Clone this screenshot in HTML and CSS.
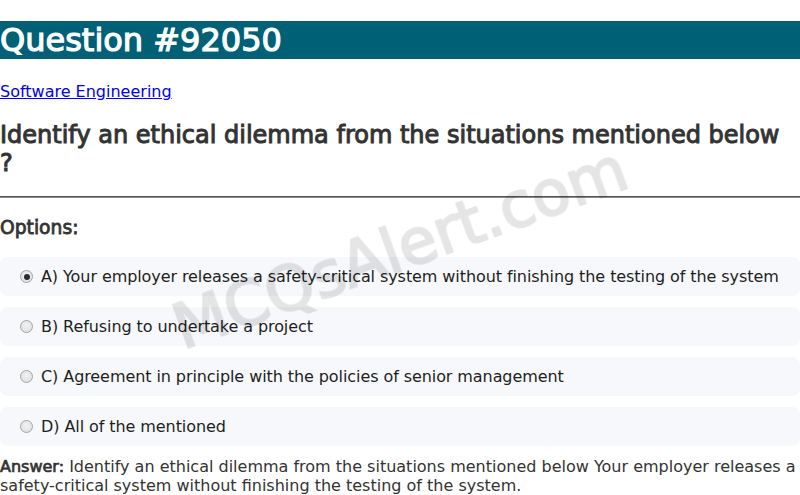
FILE: index.html
```html
<!DOCTYPE html>
<html lang="en">
<head>
<meta charset="utf-8">
<title>Question #92050</title>
<link rel="stylesheet" href="styles.css">
</head>
<body>
  <h1 class="title">Question #92050</h1>
  <p class="category"><a href="#">Software Engineering</a></p>
  <h2 class="question">Identify an ethical dilemma from the situations mentioned below ?</h2>
  <hr class="divider">
  <h3 class="options-title">Options:</h3>
  <div class="options">
    <label class="option"><input type="radio" name="q" checked disabled> A) Your employer releases a safety-critical system without finishing the testing of the system</label>
    <label class="option"><input type="radio" name="q" disabled> B) Refusing to undertake a project</label>
    <label class="option"><input type="radio" name="q" disabled> C) Agreement in principle with the policies of senior management</label>
    <label class="option"><input type="radio" name="q" disabled> D) All of the mentioned</label>
  </div>
  <div class="answer"><strong class="answer-label">Answer:</strong> Identify an ethical dilemma from the situations mentioned below Your employer releases a safety-critical system without finishing the testing of the system.</div>
  <div class="watermark">MCQsAlert.com</div>
</body>
</html>
```

FILE: styles.css
```css
html, body {
  margin: 0;
  padding: 0;
  background: #ffffff;
}

body {
  font-family: "DejaVu Sans", sans-serif;
  color: #333333;
  font-size: 16px;
}

.title {
  font-size: 32px;
  font-weight: normal;
  -webkit-text-stroke: 1.2px #ffffff;
  color: #ffffff;
  background: #006075;
  margin: 21px 0 23px;
}

.category {
  margin: 16px 0;
}

.category a {
  color: #0000ee;
  text-decoration: underline;
}

.question {
  font-size: 24px;
  font-weight: normal;
  -webkit-text-stroke: 1px #333333;
  color: #333333;
  margin: 20px 0 19px;
  padding-right: 12px;
}

.divider {
  border: none;
  border-top: 1px solid #555555;
  border-bottom: 1px solid #8a8a8a;
  height: 0;
  margin: 0;
}

.options-title {
  font-size: 18.72px;
  font-weight: normal;
  -webkit-text-stroke: 0.8px #333333;
  color: #333333;
  margin: 19px 0 19px;
}

.options {
  display: flex;
  flex-direction: column;
  gap: 11px;
}

.option {
  display: block;
  background: #f7f8fc;
  border-radius: 8px;
  padding: 10px 6px 10px 15px;
  line-height: 19px;
  color: #1e1e1e;
  letter-spacing: -0.08px;
}

.option input {
  appearance: none;
  -webkit-appearance: none;
  box-sizing: border-box;
  width: 13px;
  height: 13px;
  margin: 3px 3px 0 5px;
  border: 1px solid #a3a3a3;
  border-radius: 50%;
  background: radial-gradient(circle at 50% 40%, #f2f2f2 0%, #dcdcdc 100%);
  vertical-align: -1px;
  position: relative;
}

.option input:checked::after {
  content: "";
  position: absolute;
  left: 2.5px;
  top: 2.5px;
  width: 6px;
  height: 6px;
  border-radius: 50%;
  background: #2b2b2b;
}

.answer {
  margin-top: 11px;
  line-height: 19px;
  color: #333333;
}

.answer-label {
  font-weight: normal;
  -webkit-text-stroke: 0.7px #333333;
}

.watermark {
  position: fixed;
  top: 50%;
  left: 50%;
  transform: translate(-50%, -50%) rotate(-20deg);
  font-size: 62px;
  font-weight: normal;
  color: #000000;
  -webkit-text-stroke: 2.2px #000000;
  opacity: 0.1;
  white-space: nowrap;
  pointer-events: none;
  z-index: 10;
}
```
